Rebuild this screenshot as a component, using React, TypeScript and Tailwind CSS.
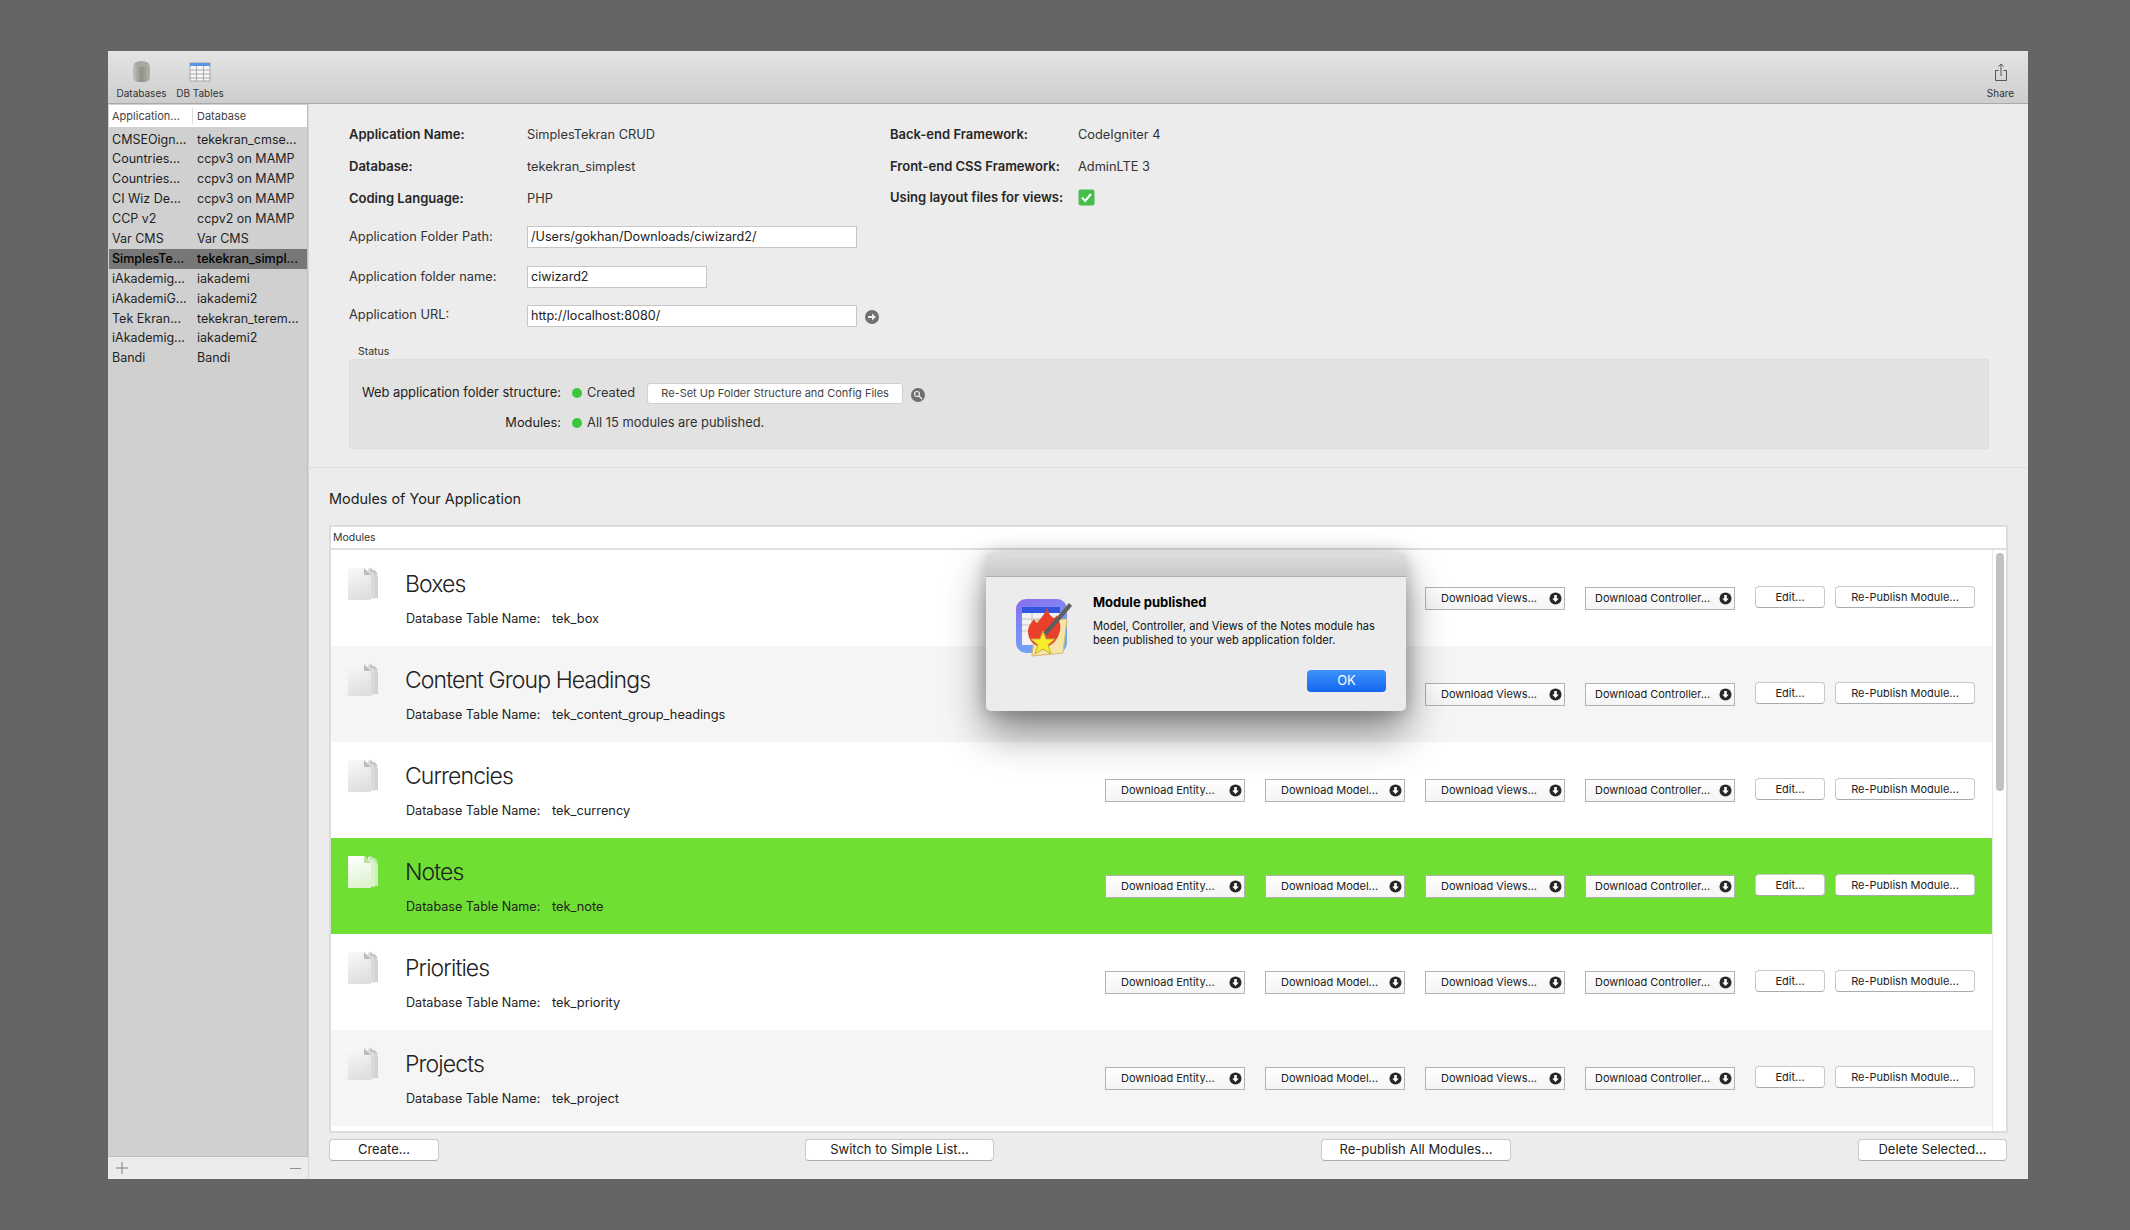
import React from "react";

const sidebar = [
  ["CMSEOign...", "tekekran_cmse..."],
  ["Countries...", "ccpv3 on MAMP"],
  ["Countries...", "ccpv3 on MAMP"],
  ["CI Wiz De...", "ccpv3 on MAMP"],
  ["CCP v2", "ccpv2 on MAMP"],
  ["Var CMS", "Var CMS"],
  ["SimplesTe...", "tekekran_simpl..."],
  ["iAkademig...", "iakademi"],
  ["iAkademiG...", "iakademi2"],
  ["Tek Ekran...", "tekekran_terem..."],
  ["iAkademig...", "iakademi2"],
  ["Bandi", "Bandi"],
];

const modules = [
  ["Boxes", "tek_box", "bg-white"],
  ["Content Group Headings", "tek_content_group_headings", "bg-[#f5f5f5]"],
  ["Currencies", "tek_currency", "bg-white"],
  ["Notes", "tek_note", "bg-[#6fdf33]"],
  ["Priorities", "tek_priority", "bg-white"],
  ["Projects", "tek_project", "bg-[#f5f5f5]"],
];

function DownArrow() {
  return (
    <svg width="13" height="13" viewBox="0 0 13 13" className="shrink-0">
      <circle cx="6.5" cy="6.5" r="6" fill="#262626" />
      <path d="M5.2 3h2.6v3.4h2L6.5 10 3.2 6.4h2z" fill="#fff" />
    </svg>
  );
}

function DocIcon({ light }: { light: boolean }) {
  const id = light ? "docL" : "docD";
  return (
    <svg width="32" height="33" viewBox="0 0 32 33" className="shrink-0">
      <defs>
        <linearGradient id={id} x1="0.2" y1="0" x2="0.5" y2="1">
          <stop offset="0" stopColor={light ? "#ffffff" : "#f7f7f7"} />
          <stop offset="1" stopColor={light ? "#ddf3cf" : "#dfdfdf"} />
        </linearGradient>
      </defs>
      <path d="M26 3l5 6v22h-7V3z" fill={light ? "#cdeebb" : "#d2d2d2"} />
      <path d="M26.500 31.500V8" stroke={light ? "#f2fbec" : "#f4f4f4"} strokeWidth="1" fill="none" />
      <path d="M22 1.500l6 6v24h-7V1.500z" fill={light ? "#d8f3c8" : "#dadada"} />
      <path d="M1 1h16.500L24 8v25H1z" fill={`url(#${id})`} />
      <path d="M17 1l7 7h-7z" fill={light ? "#b9e3a2" : "#bdbdbd"} />
      <path d="M23 0l5 5h-5zM27 2l4 5h-4z" fill={light ? "#c4e8ae" : "#c6c6c6"} />
    </svg>
  );
}

function DownloadButton({ label, wide }: { label: string; wide?: boolean }) {
  return (
    <div
      className={`flex h-[23px] items-center justify-between border border-[#b3b3b3] bg-gradient-to-b from-white to-[#f4f4f4] text-[11px] text-[#222] ${
        wide ? "w-[150px] pl-[9px] pr-[2px]" : "w-[140px] pl-[15px] pr-[2px]"
      }`}
    >
      <span className="whitespace-nowrap">{label}</span>
      <DownArrow />
    </div>
  );
}

function MacButton({ label, className }: { label: string; className: string }) {
  return (
    <div
      className={`flex items-center justify-center rounded-[4px] border border-[#c9c9c9] border-b-[#acacac] bg-white text-[#222] ${className}`}
    >
      {label}
    </div>
  );
}

function AppIcon() {
  return (
    <svg width="60" height="62" viewBox="0 0 60 62" className="shrink-0">
      <defs>
        <linearGradient id="appBg" x1="0" y1="0" x2="0.4" y2="1">
          <stop offset="0" stopColor="#8b6cf0" />
          <stop offset="1" stopColor="#6fa8f5" />
        </linearGradient>
      </defs>
      <rect x="0" y="1" width="51" height="54" rx="10" fill="url(#appBg)" />
      <rect x="6" y="9" width="38" height="38" fill="#f2f2f2" />
      <rect x="6" y="9" width="38" height="6" fill="#3256dd" />
      <path d="M6 21h38M6 27h38M6 33h38M16 15v24" stroke="#c4c4c4" strokeWidth="1" />
      <path d="M20 22l31-1-4 34-31 3z" fill="#f3e6a8" stroke="#d6b86a" strokeWidth="1" />
      <path d="M31 9c1 5 3 9 7 11 1 0 2-1 2-3 4 6 6 12 3 19-2 6-7 12-14 13-9 1-17-6-17-15 0-6 3-9 6-13 1 2 1 3 3 4 3-4 9-10 10-16z" fill="#e8402a" />
      <path d="M53 5l3 3-25 29-4-2z" fill="#5f5f5f" />
      <path d="M27 33l3 8 9 0-7 6 3 9-8-5-8 5 3-9-7-6 9 0z" fill="#f8ee2e" stroke="#c7a93c" strokeWidth="1" />
    </svg>
  );
}

export default function App() {
  return (
    <div className="h-[1230px] w-[2130px] overflow-hidden bg-[#656565] pl-[108px] pt-[51px] font-['Inter','Liberation_Sans',sans-serif] text-[12.800px] text-[#262626]">
      <div className="relative flex h-[1128px] w-[1920px] flex-col bg-[#ececec]">
        {/* toolbar */}
        <div className="flex h-[53px] shrink-0 items-start justify-between border-b border-[#a9a9a9] bg-gradient-to-b from-[#e4e4e4] to-[#cdcdcd] text-[10px] text-[#333]">
          <div className="flex pl-[8px] pt-[9px]">
            <div className="flex w-[51px] flex-col items-center">
              <svg width="20" height="24" viewBox="0 0 20 24">
                <defs>
                  <linearGradient id="cyl" x1="0" y1="0" x2="1" y2="0">
                    <stop offset="0" stopColor="#c4c4bf" />
                    <stop offset="0.5" stopColor="#8f8f8a" />
                    <stop offset="1" stopColor="#b5b5b0" />
                  </linearGradient>
                </defs>
                <rect x="1" y="2" width="17" height="20" rx="5" fill="url(#cyl)" />
                <ellipse cx="9.5" cy="4" rx="7" ry="3" fill="#a9a9a4" />
              </svg>
              <span className="mt-[3px] whitespace-nowrap leading-[12px]">Databases</span>
            </div>
            <div className="ml-[9px] flex w-[48px] flex-col items-center">
              <svg width="22" height="24" viewBox="0 0 22 24">
                <rect x="1" y="3" width="20" height="18" fill="#f6f6f6" stroke="#a8a8a8" />
                <rect x="1" y="3" width="20" height="3" fill="#5b96e6" />
                <path d="M1 10h20M1 14h20M1 18h20M7.5 6v15M14.5 6v15" stroke="#a8a8a8" strokeWidth="1" />
              </svg>
              <span className="mt-[3px] whitespace-nowrap leading-[12px]">DB Tables</span>
            </div>
          </div>
          <div className="flex w-[50px] flex-col items-center pr-[5px] pt-[12px]">
            <svg width="14" height="21" viewBox="0 0 14 21" fill="none" stroke="#555" strokeWidth="1">
              <path d="M4.5 7.5H1.5v10h11v-10H9.500M7 1v12M4.500 3.500 7 1l2.500 2.500" />
            </svg>
            <span className="mt-[3px] whitespace-nowrap leading-[12px]">Share</span>
          </div>
        </div>

        <div className="flex min-h-0 flex-1">
          {/* sidebar */}
          <div className="flex w-[201px] shrink-0 flex-col border-r border-[#d8d8d8]">
            <div className="flex min-h-0 flex-1 flex-col border-r border-[#c0c0c0] bg-[#d0d0d0] pl-[1px] pt-[1px]">
              <div className="flex h-[22px] shrink-0 items-center bg-white text-[11px] text-[#444]">
                <div className="w-[84px] border-r border-[#dcdcdc] pl-[3px] leading-[16px]">Application...</div>
                <div className="pl-[4px]">Database</div>
              </div>
              <div className="pt-[3px]">
                {sidebar.map(([a, b], i) => (
                  <div
                    key={i}
                    className={`flex h-[19.900px] items-center whitespace-nowrap text-[12.500px] ${
                      i === 6 ? "bg-[#777777] font-medium text-black" : "text-[#1f1f1f]"
                    }`}
                  >
                    <div className="w-[88px] pl-[3px]">{a}</div>
                    <div>{b}</div>
                  </div>
                ))}
              </div>
            </div>
            <div className="flex h-[23px] shrink-0 items-center justify-between border-t border-[#bdbdbd] px-[8px] text-[#808080]">
              <svg width="12" height="12" viewBox="0 0 12 12" stroke="#808080" strokeWidth="1">
                <path d="M6 0v12M0 6h12" />
              </svg>
              <div className="mr-[-1px] h-[1px] w-[11px] bg-[#909090]" />
            </div>
          </div>

          {/* main */}
          <div className="flex min-w-0 flex-1 flex-col">
            <div className="h-[364px] shrink-0 border-b border-[#dcdcdc] pl-[40px] pt-[15px]">
              <div className="flex">
                <div className="w-[541px]">
                  {[
                    ["Application Name:", "SimplesTekran CRUD"],
                    ["Database:", "tekekran_simplest"],
                    ["Coding Language:", "PHP"],
                  ].map(([k, v]) => (
                    <div key={k} className="flex h-[32px] items-center">
                      <div className="w-[178px] text-[13px] font-semibold">{k}</div>
                      <div className="text-[#333]">{v}</div>
                    </div>
                  ))}
                </div>
                <div>
                  {["Back-end Framework:", "Front-end CSS Framework:", "Using layout files for views:"].map((k, i) => (
                    <div key={k} className="flex h-[31.500px] items-center">
                      <div className="w-[188px] text-[13px] font-semibold">{k}</div>
                      {i === 0 && <div className="text-[#333]">CodeIgniter 4</div>}
                      {i === 1 && <div className="text-[#333]">AdminLTE 3</div>}
                      {i === 2 && (
                        <svg width="17" height="17" viewBox="0 0 17 17">
                          <rect x="0.500" y="0.500" width="16" height="16" rx="2" fill="#46bf4a" />
                          <path d="M4 8.500l3.200 3.500L13 5" fill="none" stroke="#fff" strokeWidth="2" />
                        </svg>
                      )}
                    </div>
                  ))}
                </div>
              </div>

              <div className="mt-[11px] flex h-[22px] items-start">
                <div className="w-[178px] pt-[1px] text-[#333]">Application Folder Path:</div>
                <div className="flex h-[22px] w-[330px] items-center border border-[#c6c6c6] bg-white pl-[3px] text-[12.600px] text-[#222]">/Users/gokhan/Downloads/ciwizard2/</div>
              </div>
              <div className="mt-[18px] flex h-[22px] items-start">
                <div className="w-[178px] pt-[1px] text-[#333]">Application folder name:</div>
                <div className="flex h-[22px] w-[180px] items-center border border-[#c6c6c6] bg-white pl-[3px] pt-[1px] text-[12.600px] text-[#222]">ciwizard2</div>
              </div>
              <div className="mt-[17px] flex h-[22px] items-start">
                <div className="w-[178px] text-[#333]">Application URL:</div>
                <div className="flex h-[22px] w-[330px] items-center border border-[#c6c6c6] bg-white pl-[3px] text-[12.600px] text-[#222]">http://localhost:8080/</div>
                <svg width="14" height="14" viewBox="0 0 14 14" className="ml-[8px] mt-[5px]">
                  <circle cx="7" cy="7" r="7" fill="#707070" />
                  <path d="M3 6h4V3.500L11 7l-4 3.500V8H3z" fill="#eee" />
                </svg>
              </div>

              <div className="ml-[9px] mt-[18px] text-[10.500px] leading-[14px] text-[#333]">Status</div>
              <div className="h-[90px] w-[1640px] rounded-[3px] border border-[#dddddd] bg-[#e2e2e2]">
                <div className="mt-[22px] flex h-[22px] items-center">
                  <div className="w-[211px] text-right text-[12.900px] text-[#222]">Web application folder structure:</div>
                  <div className="ml-[11px] h-[10px] w-[10px] rounded-full bg-[#3ec63e]" />
                  <div className="ml-[5px] text-[#333]">Created</div>
                  <div className="ml-[12px] flex h-[21px] w-[256px] items-center justify-center rounded-[3px] border border-[#cfcfcf] bg-white text-[11px] text-[#444]">
                    Re-Set Up Folder Structure and Config Files
                  </div>
                  <svg width="14" height="14" viewBox="0 0 14 14" className="ml-[8px] mt-[3px]">
                    <circle cx="7" cy="7" r="7" fill="#6f6f6f" />
                    <circle cx="6" cy="6" r="2.500" fill="none" stroke="#eee" strokeWidth="1.200" />
                    <path d="M8 8l3 3" stroke="#eee" strokeWidth="1.400" />
                  </svg>
                </div>
                <div className="mt-[8px] flex h-[22px] items-center">
                  <div className="w-[211px] text-right text-[#222]">Modules:</div>
                  <div className="ml-[11px] h-[10px] w-[10px] rounded-full bg-[#3ec63e]" />
                  <div className="ml-[5px] text-[12.900px] text-[#333]">All 15 modules are published.</div>
                </div>
              </div>
            </div>

            <div className="flex min-h-0 flex-1 flex-col pl-[20px]">
              <div className="mt-[21px] h-[20px] text-[14.400px] leading-[20px] text-[#222]">Modules of Your Application</div>
              <div className="mt-[16px] flex h-[608px] w-[1679px] shrink-0 flex-col overflow-hidden border-2 border-[#dcdcdc] bg-white">
                <div className="flex h-[23px] shrink-0 items-center border-b-2 border-[#e0e0e0] pl-[2px] text-[10.500px] text-[#333]">Modules</div>
                <div className="flex min-h-0 flex-1">
                  <div className="w-[1661px] shrink-0">
                    {modules.map(([name, table, bg], i) => (
                      <div key={name} className={`flex h-[96px] items-center ${bg}`}>
                        <div className="ml-[16px] -mt-[30px] w-[32px] shrink-0">
                          <DocIcon light={i === 3} />
                        </div>
                        <div className="ml-[26px] flex-1">
                          <div className="text-[23px] font-light leading-[30px] tracking-[-0.900px] text-[#222]">{name}</div>
                          <div className="mt-[11px] flex leading-[18px] text-[#222]">
                            <span className="ml-[1px] w-[146px] text-[12.600px]">Database Table Name:</span>
                            <span>{table}</span>
                          </div>
                        </div>
                        <div className="mr-[17px] flex items-center">
                          {i > 1 ? (
                            <>
                              <DownloadButton label="Download Entity..." />
                              <div className="w-[20px]" />
                              <DownloadButton label="Download Model..." />
                              <div className="w-[20px]" />
                            </>
                          ) : null}
                          <DownloadButton label="Download Views..." />
                          <div className="w-[20px]" />
                          <DownloadButton label="Download Controller..." wide />
                          <div className="w-[20px]" />
                          <MacButton label="Edit..." className="-mt-[2px] h-[22px] w-[70px] text-[11px]" />
                          <div className="w-[10px]" />
                          <MacButton label="Re-Publish Module..." className="-mt-[2px] h-[22px] w-[140px] text-[11px]" />
                        </div>
                      </div>
                    ))}
                  </div>
                  <div className="relative flex-1 border-l border-[#e9e9e9]">
                    <div className="absolute left-[3px] top-[3px] h-[238px] w-[8px] rounded-full bg-[#c1c1c1]" />
                  </div>
                </div>
              </div>
              <div className="mt-[6px] flex text-[13px]">
                <MacButton label="Create..." className="h-[22px] w-[110px]" />
                <MacButton label="Switch to Simple List..." className="ml-[366px] h-[22px] w-[189px]" />
                <MacButton label="Re-publish All Modules..." className="ml-[327px] h-[22px] w-[190px]" />
                <MacButton label="Delete Selected..." className="ml-[347px] h-[22px] w-[149px]" />
              </div>
            </div>
          </div>
        </div>

        {/* dialog */}
        <div className="absolute left-[878px] top-[502px] h-[158px] w-[420px] overflow-hidden rounded-[5px] bg-[#ececec] shadow-[0_22px_40px_rgba(0,0,0,0.45),0_0_18px_rgba(0,0,0,0.22)]">
          <div className="h-[24px] border-b border-[#aeaeae] bg-gradient-to-b from-[#dedede] to-[#c9c9c9]" />
          <div className="flex pl-[30px] pt-[21px]">
            <AppIcon />
            <div className="ml-[17px] -mt-[4px] text-[11.100px] text-[#111]">
              <div className="text-[13px] font-bold leading-[16px] text-black">Module published</div>
              <div className="mt-[9px] leading-[14px]">
                Model, Controller, and Views of the Notes module has
                <br />
                been published to your web application folder.
              </div>
            </div>
          </div>
          <div className="absolute bottom-[19px] right-[20px] flex h-[22px] w-[79px] items-center justify-center rounded-[4px] bg-gradient-to-b from-[#3f93fb] to-[#1366f0] text-[13px] text-white">
            OK
          </div>
        </div>
      </div>
    </div>
  );
}
